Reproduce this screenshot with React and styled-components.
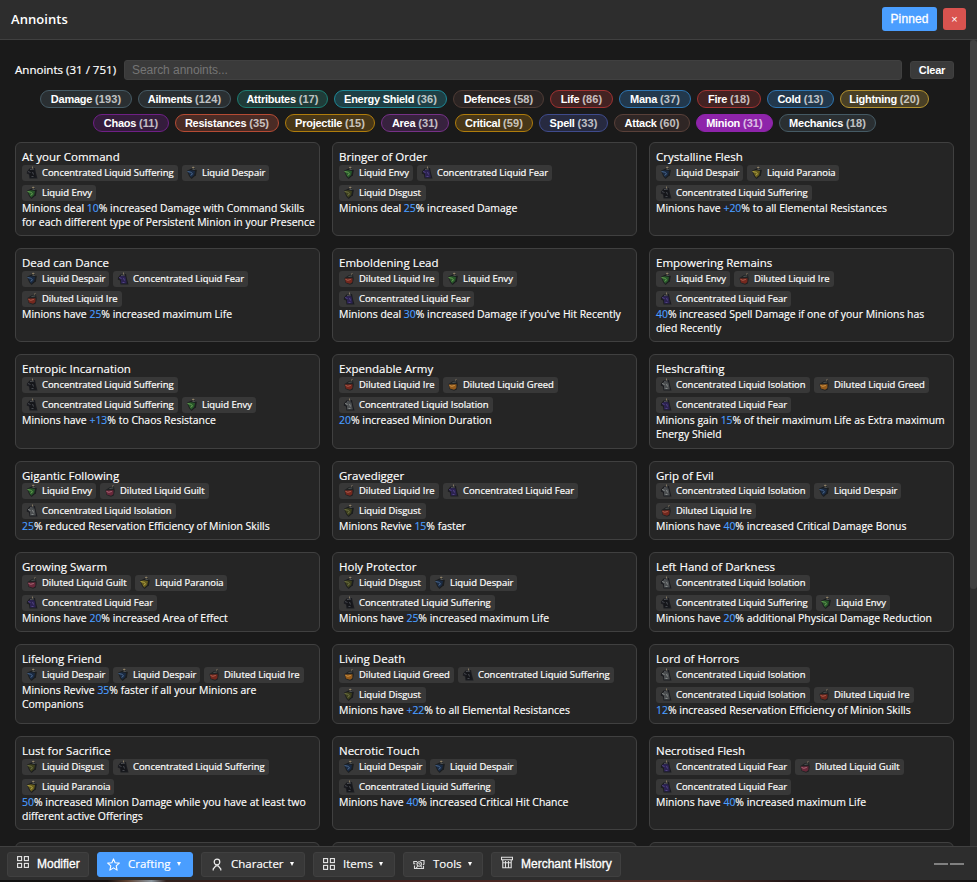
import React from 'react';
import styled, { createGlobalStyle } from 'styled-components';

const ui = '"Segoe UI", "Open Sans", sans-serif';
const arial = 'Arial, "Liberation Sans", sans-serif';

const Global = createGlobalStyle`
  * { box-sizing: border-box; }
  body { margin: 0; background: #1a1a1a; overflow: hidden; }
  button, input { font: inherit; color: inherit; margin: 0; }
`;

const Shell = styled.div`
  height: 882px;
  display: flex;
  flex-direction: column;
  background: #1a1a1a;
  color: #fff;
  font-family: ${ui};
`;

const Header = styled.header`
  height: 40px;
  flex: none;
  display: flex;
  align-items: center;
  gap: 6px;
  padding: 0 11px 2px;
  background: #2d2d2d;
  border-bottom: 1px solid #404040;
`;

const PageTitle = styled.h1`
  margin: 0 auto 0 0;
  font-size: 13px;
  line-height: 18px;
  font-weight: 600;
  letter-spacing: 0.05px;
`;

const PinButton = styled.button`
  width: 55px;
  height: 24px;
  padding: 0;
  border: 0;
  border-radius: 3px;
  background: #4a9eff;
  font: 12px/22px ${arial};
  letter-spacing: 0.1px;
  -webkit-text-stroke: 0.3px #fff;
`;

const CloseButton = styled.button`
  width: 23px;
  height: 22px;
  padding: 0;
  border: 0;
  border-radius: 3px;
  background: #d9534f;
  font: 11px/20px ${arial};
`;

const Body = styled.main`
  flex: 1;
  min-height: 0;
  display: flex;
`;

const Content = styled.section`
  width: 970px;
  padding: 20px 16px 0 15px;
  overflow: hidden;
`;

const ScrollTrack = styled.div`
  width: 7px;
  background: #2d2d2d;
`;

const ScrollThumb = styled.div`
  height: 549px;
  background: #404040;
  border-radius: 4px;
`;

const SearchRow = styled.div`
  display: flex;
  align-items: center;
  height: 20px;
`;

const Count = styled.span`
  width: 109px;
  font-size: 11.55px;
  line-height: 16px;
  padding-bottom: 1px;
  -webkit-text-stroke: 0.2px #fff;
  white-space: nowrap;
`;

const Search = styled.input`
  width: 778px;
  height: 20px;
  padding: 0 7px;
  margin-right: 8px;
  border: 1px solid #404040;
  border-radius: 3px;
  background: #3a3a3a;
  font: 12px ${arial};
  letter-spacing: -0.05px;
  &::placeholder { color: #757575; }
`;

const ClearButton = styled.button`
  width: 44px;
  height: 18px;
  padding: 0;
  border: 1px solid #404040;
  border-radius: 3px;
  background: #3a3a3a;
  font: bold 11px/16px ${arial};
  letter-spacing: -0.25px;
`;

const Filters = styled.div`
  display: flex;
  flex-direction: column;
  gap: 6px;
  margin: 10px 0 10px;
`;

const FilterRow = styled.div`
  display: flex;
  gap: 6px;
  padding-left: ${(p) => p.$indent}px;
`;

const Pill = styled.button`
  width: ${(p) => p.$w}px;
  height: 18px;
  flex: none;
  padding: 0;
  border: 1px solid ${(p) => p.$line};
  border-radius: 9px;
  background: ${(p) => p.$fill};
  font: bold 11px/16px ${arial};
  letter-spacing: -0.25px;
  white-space: nowrap;
`;

const PillCount = styled.span`
  opacity: 0.7;
  letter-spacing: 0.1px;
`;

const Cards = styled.div`
  display: grid;
  grid-template-columns: repeat(3, 305px);
  grid-template-rows: repeat(3, 94.2px) repeat(3, 79.8px) repeat(2, 94.2px);
  gap: 12px;
`;

const Card = styled.article`
  padding: 6px;
  border: 1px solid #404040;
  border-radius: 6px;
  background: #252525;
`;

const CardTitle = styled.h2`
  height: 15.8px;
  margin: 0;
  font-size: 11.5px;
  line-height: 15.6px;
  font-weight: 400;
  -webkit-text-stroke: 0.15px #fff;
  white-space: nowrap;
`;

const Chips = styled.div`
  display: flex;
  flex-wrap: wrap;
  gap: 4px;
`;

const Chip = styled.span`
  width: ${(p) => p.$w}px;
  height: 16px;
  display: flex;
  align-items: center;
  gap: 4px;
  padding-left: 4px;
  border-radius: 3px;
  background: #383838;
  font-size: 9.45px;
  line-height: 16px;
  -webkit-text-stroke: 0.2px #fff;
  white-space: nowrap;
`;

const Description = styled.p`
  margin: 0;
  font-size: 10.44px;
  line-height: 14px;
  -webkit-text-stroke: 0.15px;
  white-space: pre;
`;

const Value = styled.span`
  color: #4a9eff;
`;

const Dock = styled.footer`
  height: 34px;
  flex: none;
  display: flex;
  align-items: center;
  gap: 8px;
  padding: 1px 13px 0 7px;
  background: #2d2d2d;
  border-top: 1px solid #404040;
`;

const DockButton = styled.button`
  width: ${(p) => p.$w}px;
  height: 25px;
  display: flex;
  align-items: center;
  padding: 0 0 ${(p) => (p.$plain ? 0 : 2)}px 9px;
  gap: 8px;
  border: 1px solid ${(p) => (p.$active ? '#4a9eff' : '#404040')};
  border-radius: 3px;
  background: ${(p) => (p.$active ? '#4a9eff' : '#383838')};
  font-family: ${(p) => (p.$plain ? arial : ui)};
  font-size: ${(p) => (p.$plain ? 12 : 11.5)}px;
  line-height: 17px;
  -webkit-text-stroke: ${(p) => (p.$plain ? '0.3px' : '0.15px')} #fff;
  white-space: nowrap;
  & > svg {
    flex: none;
    margin-bottom: ${(p) => (p.$plain ? 4 : 0)}px;
    margin-top: ${(p) => (p.$plain ? 0 : 2)}px;
  }
`;

const Caret = styled.i`
  margin: 1px 0 0 -2px;
  border: 0 solid transparent;
  border-width: 4px 2.6px 0;
  border-top-color: #fff;
`;

const Grip = styled.div`
  display: flex;
  gap: 2px;
  margin-left: auto;
`;

const GripBar = styled.i`
  width: 14px;
  height: 2px;
  background: #808080;
`;

const Backdrop = styled.div`
  height: 2px;
  flex: none;
  background: linear-gradient(90deg, #111 0, #15100f 11%, #5d4030 13%, #8d98a0 15.5%, #30201c 17%, #3b1d19 28%, #472421 45%, #503029 70%, #1c1314 82%, #30201e 90%, #111 100%);
`;

const liquids = {
  S: { name: 'Concentrated Liquid Suffering', w: 156, color: '#15161a', glint: '#4c4e55', size: 3 },
  F: { name: 'Concentrated Liquid Fear', w: 135, color: '#2b2250', glint: '#57478a', size: 3 },
  I: { name: 'Concentrated Liquid Isolation', w: 154, color: '#4b4e50', glint: '#8b8f8f', size: 3 },
  D: { name: 'Liquid Despair', w: 87, color: '#1a2a42', glint: '#506f96', size: 2 },
  E: { name: 'Liquid Envy', w: 74, color: '#28582a', glint: '#6fa858', size: 2 },
  G: { name: 'Liquid Disgust', w: 87, color: '#3d3f1d', glint: '#75794a', size: 2 },
  P: { name: 'Liquid Paranoia', w: 92, color: '#655b1d', glint: '#bcae48', size: 2 },
  R: { name: 'Diluted Liquid Ire', w: 100, color: '#74281e', glint: '#b06454', size: 1 },
  U: { name: 'Diluted Liquid Guilt', w: 109, color: '#68283a', glint: '#b06f7c', size: 1 },
  O: { name: 'Diluted Liquid Greed', w: 115, color: '#935a1b', glint: '#d39a4c', size: 1 },
};

function Flask({ color, glint, size }) {
  return (
    <svg width="12" height="14" viewBox="0 0 12 14" strokeWidth="0.9">
      {size === 3 && (
        <>
          <path d="M1 5.5L3.5 2.5 9 2l1 5 1.5 5.5H3.5L3 8.5 .8 7.5z" fill="#1b1c20" />
          <path d="M2 5.5l2.5-2 4 1L9 7l.8 4.5H4L4 8z" fill={color} />
          <path d="M2 5.5l2.5 1M6.5 6l1 2.5M5.5 10.5h2" stroke={glint} />
          <path d="M4 3.5l4-.5" stroke="#53565a" />
          <path d="M6.5 .5v2" stroke="#8c8068" />
        </>
      )}
      {size === 2 && (
        <>
          <path d="M1 4.8L4.5 3 8 1.5l2.8 2.7-.9 5L5.5 13 3 10z" fill="#1b1d1e" />
          <path d="M1.5 5l3.5-.8 4 .8-.8 4-3 2.7L3.5 9z" fill={color} />
          <path d="M1.5 5.5l3 .7 2 1.3M4.5 9.3l2-1.2" stroke={glint} fill="none" />
          <path d="M6.5 3.5l3-.2" stroke="#53585a" />
          <path d="M6 1.6h2.5M7.2 .6v2" stroke="#a99775" strokeWidth="0.7" />
        </>
      )}
      {size === 1 && (
        <>
          <path d="M1.5 6L6 3l4-.5.8 4.5-1 4.5L7 12.7 2.5 11z" fill="#202223" />
          <path d="M1.8 6.5l7.7-.3-.2 4-2.3 1.6L3 10.5z" fill={color} />
          <path d="M2.5 7.4l2.3.9 3-.9" stroke={glint} fill="none" />
          <path d="M5.5 4.5l3.8-.6" stroke="#555a59" />
          <path d="M8 2.4l1.5-1" stroke="#a99775" strokeWidth="0.7" />
        </>
      )}
    </svg>
  );
}

const cards = [
  ['At your Command', 'SDE', 'Minions deal *10*% increased Damage with Command Skills\nfor each different type of Persistent Minion in your Presence'],
  ['Bringer of Order', 'EFG', 'Minions deal *25*% increased Damage'],
  ['Crystalline Flesh', 'DPS', 'Minions have *+20*% to all Elemental Resistances'],
  ['Dead can Dance', 'DFR', 'Minions have *25*% increased maximum Life'],
  ['Emboldening Lead', 'REF', "Minions deal *30*% increased Damage if you've Hit Recently"],
  ['Empowering Remains', 'ERF', '*40*% increased Spell Damage if one of your Minions has\ndied Recently'],
  ['Entropic Incarnation', 'SSE', 'Minions have *+13*% to Chaos Resistance'],
  ['Expendable Army', 'ROI', '*20*% increased Minion Duration'],
  ['Fleshcrafting', 'IOF', 'Minions gain *15*% of their maximum Life as Extra maximum\nEnergy Shield'],
  ['Gigantic Following', 'EUI', '*25*% reduced Reservation Efficiency of Minion Skills'],
  ['Gravedigger', 'RFG', 'Minions Revive *15*% faster'],
  ['Grip of Evil', 'IDR', 'Minions have *40*% increased Critical Damage Bonus'],
  ['Growing Swarm', 'UPF', 'Minions have *20*% increased Area of Effect'],
  ['Holy Protector', 'GDS', 'Minions have *25*% increased maximum Life'],
  ['Left Hand of Darkness', 'ISE', 'Minions have *20*% additional Physical Damage Reduction'],
  ['Lifelong Friend', 'DDR', 'Minions Revive *35*% faster if all your Minions are\nCompanions'],
  ['Living Death', 'OSG', 'Minions have *+22*% to all Elemental Resistances'],
  ['Lord of Horrors', 'IIR', '*12*% increased Reservation Efficiency of Minion Skills'],
  ['Lust for Sacrifice', 'GSP', '*50*% increased Minion Damage while you have at least two\ndifferent active Offerings'],
  ['Necrotic Touch', 'DDS', 'Minions have *40*% increased Critical Hit Chance'],
  ['Necrotised Flesh', 'FUF', 'Minions have *40*% increased maximum Life'],
];

const filterRows = [
  {
    indent: 25,
    items: [
      ['Damage', 193, 92, '#455a64', '#2a2f32'],
      ['Ailments', 124, 93, '#455a64', '#2a2f32'],
      ['Attributes', 17, 91, '#1c7d72', '#1f3b38'],
      ['Energy Shield', 36, 113, '#1d8796', '#1e3f45'],
      ['Defences', 58, 91, '#4e3b35', '#2b2423'],
      ['Life', 86, 63, '#a03232', '#432222'],
      ['Mana', 37, 72, '#2d74b0', '#22384c'],
      ['Fire', 18, 64, '#a03232', '#432222'],
      ['Cold', 13, 67, '#2d74b0', '#22384c'],
      ['Lightning', 20, 89, '#b3922f', '#494026'],
    ],
  },
  {
    indent: 78,
    items: [
      ['Chaos', 11, 76, '#6f2086', '#341c3c'],
      ['Resistances', 35, 104, '#b64b34', '#4a2b25'],
      ['Projectile', 15, 90, '#b07d0c', '#483717'],
      ['Area', 31, 68, '#763187', '#37223e'],
      ['Critical', 59, 78, '#b07d0c', '#483717'],
      ['Spell', 33, 69, '#3f4b8c', '#272a40'],
      ['Attack', 60, 76, '#594039', '#2f2625'],
      ['Minion', 31, 77, '#8e24aa', '#8e24aa'],
      ['Mechanics', 18, 97, '#455a64', '#2a2f32'],
    ],
  },
];

const GridIcon = () => (
  <svg width="12" height="12" viewBox="0 0 12 12" fill="none" stroke="#e8e8e8" strokeWidth="1.1">
    <rect x=".6" y=".6" width="4" height="4" /><rect x="7.4" y=".6" width="4" height="4" />
    <rect x=".6" y="7.4" width="4" height="4" /><rect x="7.4" y="7.4" width="4" height="4" />
  </svg>
);

const StarIcon = () => (
  <svg width="13" height="13" viewBox="0 0 13 13" fill="none" stroke="#fff" strokeWidth="1.1" strokeLinejoin="round">
    <path d="M6.5 .9l1.6 3.8 4.2.4-3.1 2.8.9 4.2-3.6-2.2-3.6 2.2.9-4.2L.7 5.1l4.2-.4z" />
  </svg>
);

const PersonIcon = () => (
  <svg width="12" height="13" viewBox="0 0 12 13" fill="none" stroke="#eee" strokeWidth="1.2">
    <circle cx="6" cy="4" r="2.8" /><path d="M2.2 12.5V11L4.8 7.8h2.4L9.8 11v1.5" />
  </svg>
);

const ToolsIcon = () => (
  <svg width="12" height="12" viewBox="0 0 12 12" fill="none" stroke="#dcdcdc" strokeWidth="1.1">
    <path d="M4 3.5H.8v2.2h1.5M1.5 7.5v3h9V8M7.5 2.5H11v3.5l-1 1" />
    <circle cx="6.2" cy="6" r="2.2" /><path d="M3 9.8l1.8-1.5M7.8 8l1.2 1.5M5.5 5.2l1.6 1.2" />
  </svg>
);

const ShopIcon = () => (
  <svg width="12" height="13" viewBox="0 0 12 13" fill="none" stroke="#e0e0e0" strokeWidth="1.1">
    <path d="M.5 3.8V1.2h11v2.6zM1.8 3.8v8h8.4v-8M4.5 5v6.5M7.5 5v6.5M1.5 6.8h9" />
  </svg>
);

function Highlighted({ text }) {
  return text.split('*').map((part, i) => (i % 2 ? <Value key={i}>{part}</Value> : part));
}

export default function App() {
  return (
    <>
      <Global />
      <Shell>
        <Header>
          <PageTitle>Annoints</PageTitle>
          <PinButton>Pinned</PinButton>
          <CloseButton>×</CloseButton>
        </Header>
        <Body>
          <Content>
            <SearchRow>
              <Count>Annoints (31 / 751)</Count>
              <Search placeholder="Search annoints..." />
              <ClearButton>Clear</ClearButton>
            </SearchRow>
            <Filters>
              {filterRows.map((row) => (
                <FilterRow key={row.indent} $indent={row.indent}>
                  {row.items.map(([label, count, w, line, fill]) => (
                    <Pill key={label} $w={w} $line={line} $fill={fill}>
                      {label} <PillCount>({count})</PillCount>
                    </Pill>
                  ))}
                </FilterRow>
              ))}
            </Filters>
            <Cards>
              {cards.map(([title, codes, text]) => (
                <Card key={title}>
                  <CardTitle>{title}</CardTitle>
                  <Chips>
                    {[...codes].map((code, i) => (
                      <Chip key={i} $w={liquids[code].w}>
                        <Flask {...liquids[code]} />
                        {liquids[code].name}
                      </Chip>
                    ))}
                  </Chips>
                  <Description><Highlighted text={text} /></Description>
                </Card>
              ))}
              <Card /><Card /><Card />
            </Cards>
          </Content>
          <ScrollTrack><ScrollThumb /></ScrollTrack>
        </Body>
        <Dock>
          <DockButton $w={82} $plain><GridIcon />Modifier</DockButton>
          <DockButton $w={96} $active><StarIcon />Crafting<Caret /></DockButton>
          <DockButton $w={104}><PersonIcon />Character<Caret /></DockButton>
          <DockButton $w={82}><GridIcon />Items<Caret /></DockButton>
          <DockButton $w={80}><ToolsIcon />Tools<Caret /></DockButton>
          <DockButton $w={130} $plain><ShopIcon />Merchant History</DockButton>
          <Grip><GripBar /><GripBar /></Grip>
        </Dock>
        <Backdrop />
      </Shell>
    </>
  );
}
